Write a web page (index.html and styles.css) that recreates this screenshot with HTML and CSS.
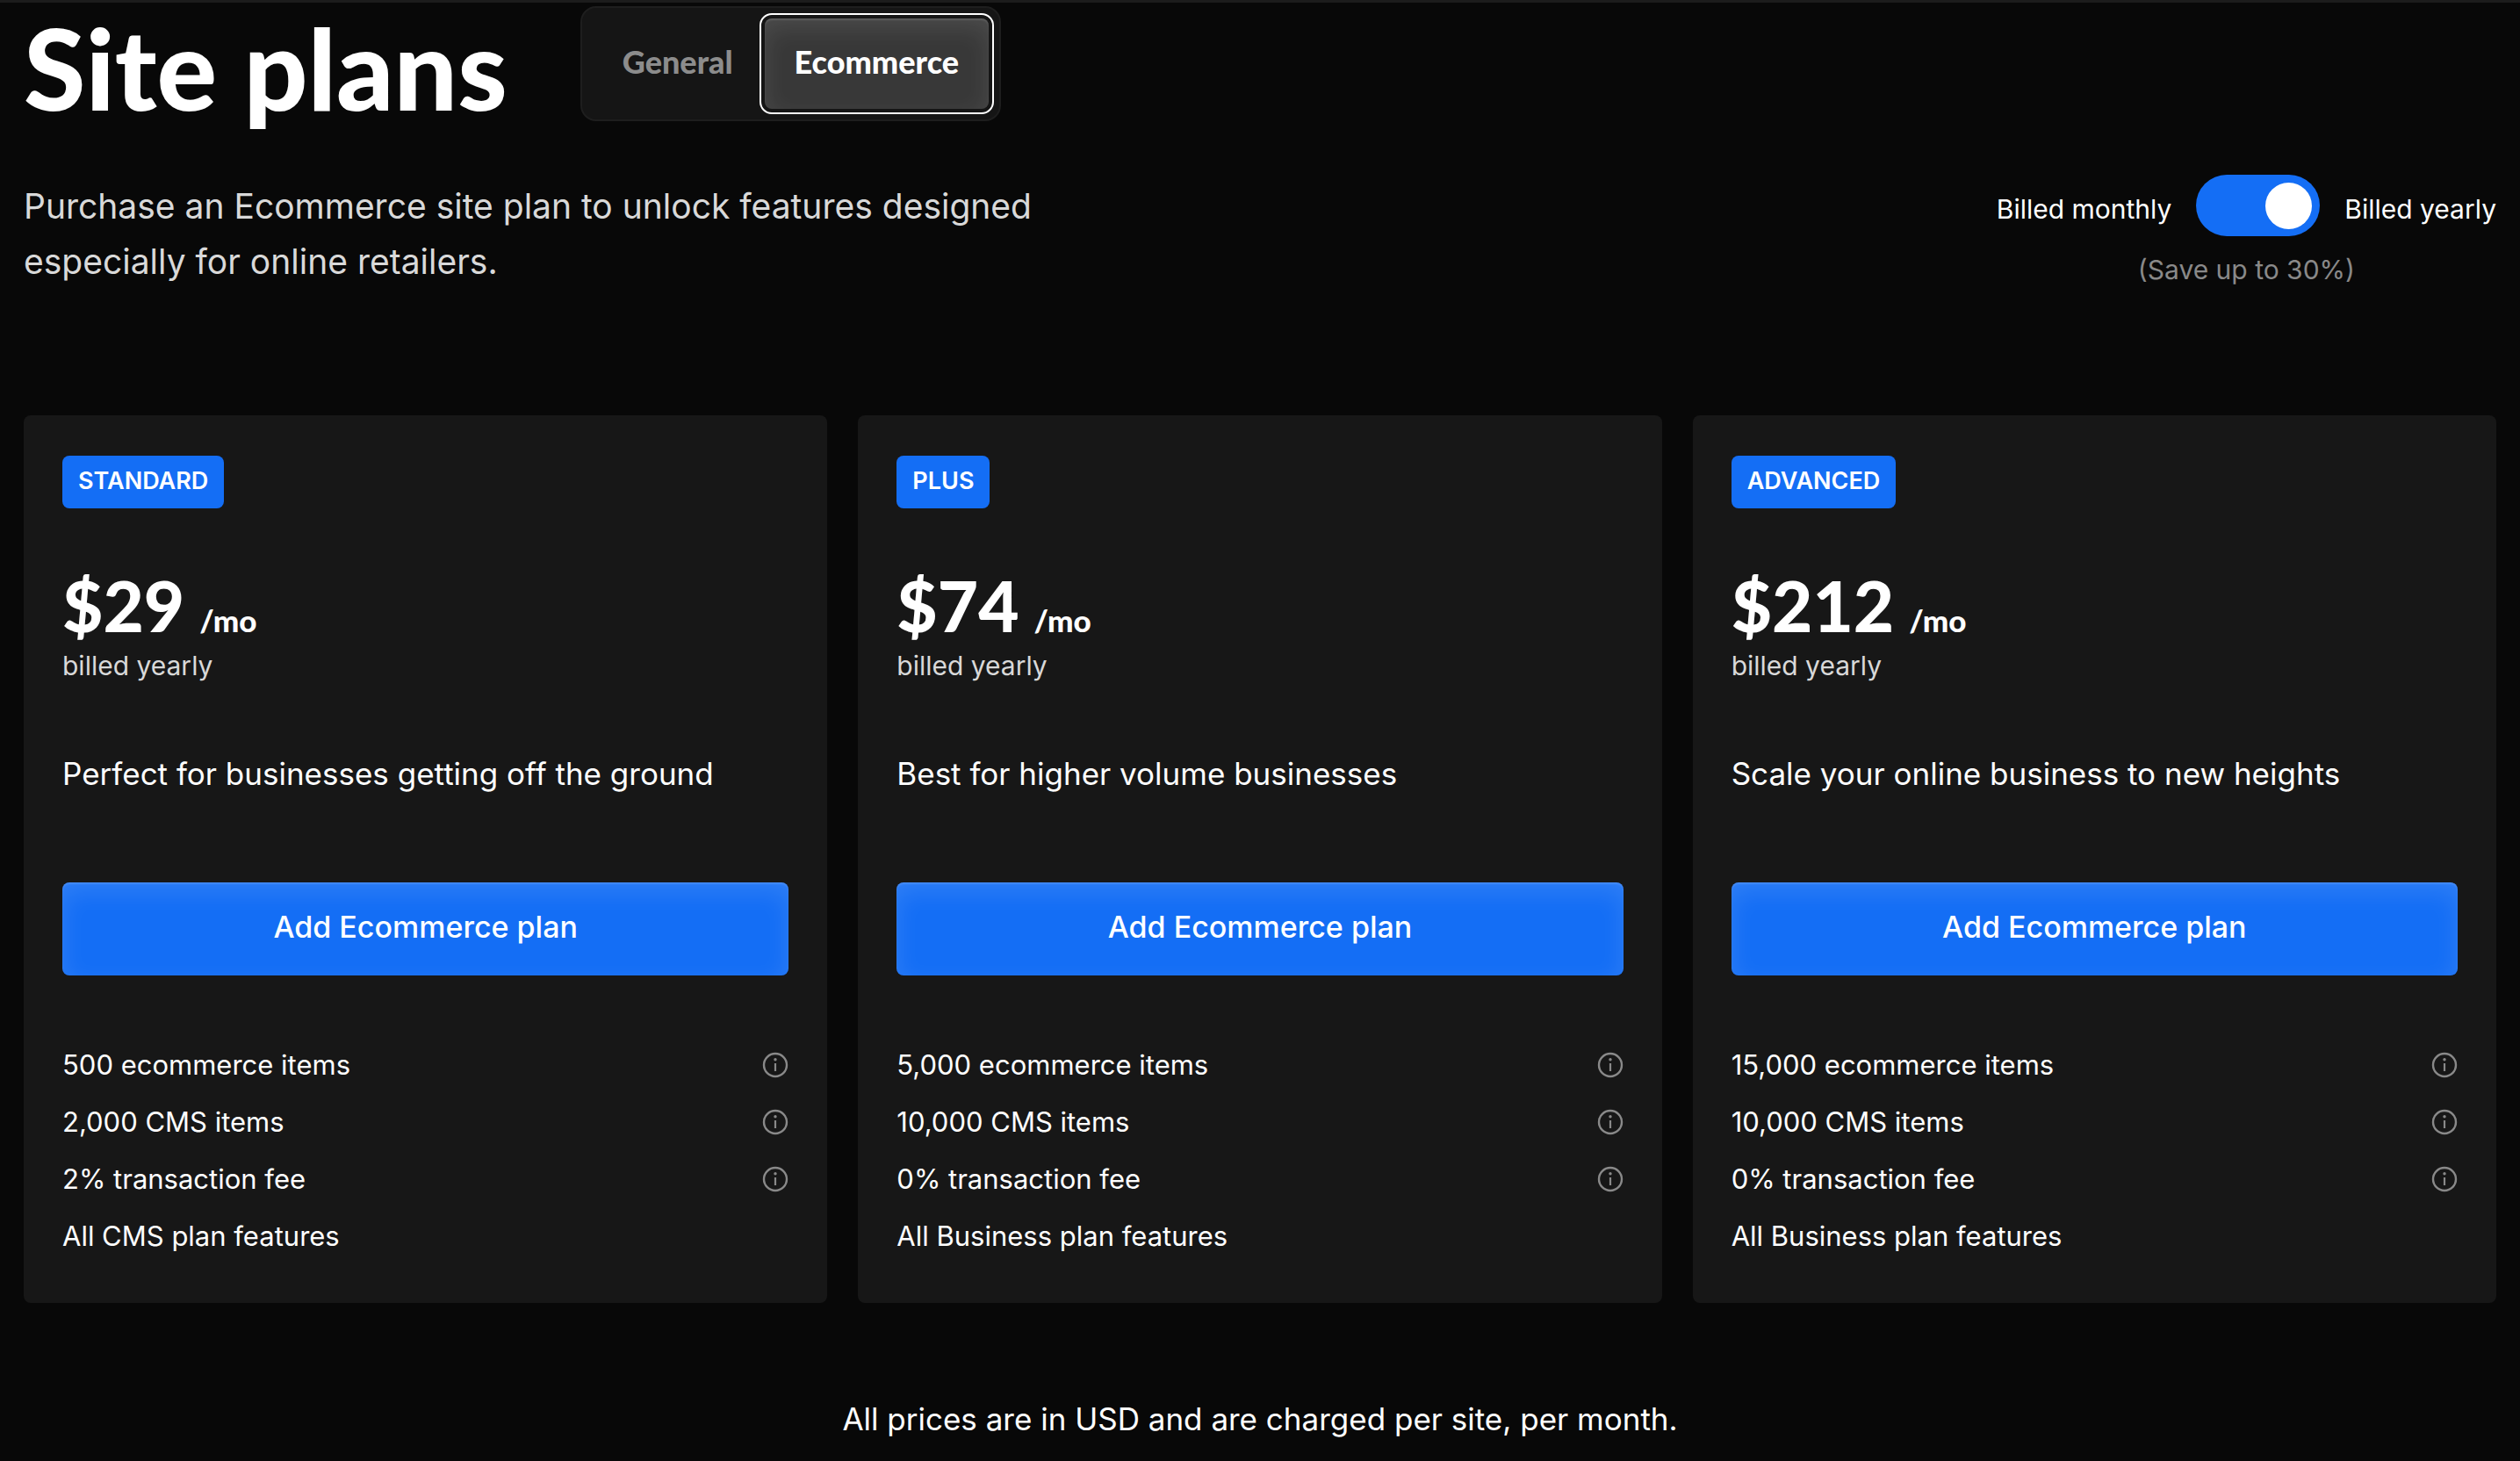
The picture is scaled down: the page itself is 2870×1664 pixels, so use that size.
FILE: index.html
```html
<!DOCTYPE html>
<html lang="en">
<head>
<meta charset="utf-8">
<meta name="viewport" content="width=device-width, initial-scale=1">
<title>Site plans</title>
<link rel="stylesheet" href="styles.css">
</head>
<body>
<svg class="sprite" aria-hidden="true">
  <symbol id="info" viewBox="0 0 30 30">
    <circle cx="15" cy="15" r="13" fill="none" stroke="currentColor" stroke-width="2.4"/>
    <circle cx="15" cy="8.8" r="1.7" fill="currentColor"/>
    <path d="M15 13v9" fill="none" stroke="currentColor" stroke-width="2.2"/>
  </symbol>
</svg>
<main class="page">
  <header class="header">
    <h1 class="title">Site plans</h1>
    <div class="tabs">
      <button class="tab" type="button">General</button>
      <button class="tab tab-active" type="button">Ecommerce</button>
    </div>
  </header>

  <div class="subheader">
    <p class="intro">Purchase an Ecommerce site plan to unlock features designed especially for online retailers.</p>
    <div class="billing">
      <div class="billing-row">
        <span class="billing-label">Billed monthly</span>
        <input class="switch" id="yearly" type="checkbox" role="switch" checked>
        <label class="billing-label" for="yearly">Billed yearly</label>
      </div>
      <p class="billing-note">(Save up to 30%)</p>
    </div>
  </div>

  <div class="plans">
    <section class="card">
      <h2 class="badge">STANDARD</h2>
      <p class="price">$29<span class="per">/mo</span></p>
      <p class="cycle">billed yearly</p>
      <p class="description">Perfect for businesses getting off the ground</p>
      <button class="cta" type="button">Add Ecommerce plan</button>
      <ul class="features">
        <li class="feature">500 ecommerce items<button class="info" type="button" aria-label="More information"><svg class="icon"><use href="#info"/></svg></button></li>
        <li class="feature">2,000 CMS items<button class="info" type="button" aria-label="More information"><svg class="icon"><use href="#info"/></svg></button></li>
        <li class="feature">2% transaction fee<button class="info" type="button" aria-label="More information"><svg class="icon"><use href="#info"/></svg></button></li>
        <li class="feature">All CMS plan features</li>
      </ul>
    </section>

    <section class="card">
      <h2 class="badge">PLUS</h2>
      <p class="price">$74<span class="per">/mo</span></p>
      <p class="cycle">billed yearly</p>
      <p class="description">Best for higher volume businesses</p>
      <button class="cta" type="button">Add Ecommerce plan</button>
      <ul class="features">
        <li class="feature">5,000 ecommerce items<button class="info" type="button" aria-label="More information"><svg class="icon"><use href="#info"/></svg></button></li>
        <li class="feature">10,000 CMS items<button class="info" type="button" aria-label="More information"><svg class="icon"><use href="#info"/></svg></button></li>
        <li class="feature">0% transaction fee<button class="info" type="button" aria-label="More information"><svg class="icon"><use href="#info"/></svg></button></li>
        <li class="feature">All Business plan features</li>
      </ul>
    </section>

    <section class="card">
      <h2 class="badge">ADVANCED</h2>
      <p class="price">$212<span class="per">/mo</span></p>
      <p class="cycle">billed yearly</p>
      <p class="description">Scale your online business to new heights</p>
      <button class="cta" type="button">Add Ecommerce plan</button>
      <ul class="features">
        <li class="feature">15,000 ecommerce items<button class="info" type="button" aria-label="More information"><svg class="icon"><use href="#info"/></svg></button></li>
        <li class="feature">10,000 CMS items<button class="info" type="button" aria-label="More information"><svg class="icon"><use href="#info"/></svg></button></li>
        <li class="feature">0% transaction fee<button class="info" type="button" aria-label="More information"><svg class="icon"><use href="#info"/></svg></button></li>
        <li class="feature">All Business plan features</li>
      </ul>
    </section>
  </div>

  <p class="footnote">All prices are in USD and are charged per site, per month.</p>
</main>
</body>
</html>
```
FILE: styles.css
```css
* {
  box-sizing: border-box;
  margin: 0;
  padding: 0;
}

body {
  background: #080808;
  border-top: 3px solid #1c1c1c;
  color: #fff;
  font-family: Inter, "Liberation Sans", sans-serif;
  font-size: 30px;
  line-height: 40px;
}

button {
  border: 0;
  color: inherit;
  font: inherit;
}

.sprite {
  display: none;
}

.page {
  padding: 4px 27px 22px;
}

/* Title and plan type tabs */

.header {
  display: flex;
  align-items: flex-start;
  gap: 83px;
}

.title {
  font-family: Lato, sans-serif;
  font-size: 128px;
  font-weight: 900;
  line-height: 140px;
}

.tabs {
  display: flex;
  gap: 2px;
  padding: 12px;
  background: #151515;
  border: 2px solid #1e1e1e;
  border-radius: 18px;
}

.tab {
  height: 103px;
  padding: 0 34px 5px;
  background: none;
  border-radius: 8px;
  color: #8c8c8c;
  font-family: Lato, sans-serif;
  font-size: 36px;
  font-weight: 900;
}

.tab-active {
  background: #383838;
  box-shadow: inset 0 2px 2px rgba(255, 255, 255, 0.12), inset 0 10px 28px rgba(255, 255, 255, 0.1);
  color: #fff;
  outline: 2px solid #fff;
  outline-offset: 4px;
}

/* Intro and billing switch */

.subheader {
  display: flex;
  justify-content: space-between;
  align-items: flex-start;
  margin: 52px 0 144px;
}

.intro {
  max-width: 1240px;
  padding-top: 4px;
  color: #d9d9d9;
  font-size: 39px;
  line-height: 63px;
}

.billing {
  text-align: center;
}

.billing-row {
  display: flex;
  align-items: center;
  gap: 28px;
}

.billing-label {
  padding-top: 8px;
}

.switch {
  display: flex;
  align-items: center;
  justify-content: flex-end;
  width: 141px;
  height: 70px;
  padding: 0 9px;
  appearance: none;
  background: #146ef5;
  border-radius: 35px;
}

.switch::before {
  content: "";
  width: 53px;
  height: 53px;
  background: #fff;
  border-radius: 50%;
}

.switch:not(:checked) {
  justify-content: flex-start;
  background: #5a5a5a;
}

.billing-note {
  margin-top: 18px;
  color: #898989;
}

/* Plan cards */

.plans {
  display: grid;
  grid-template-columns: repeat(3, 1fr);
  gap: 35px;
}

.card {
  display: flex;
  flex-direction: column;
  align-items: flex-start;
  padding: 46px 44px 44px;
  background: #171717;
  border-radius: 8px;
}

.badge {
  padding: 9px 18px 11px;
  background: #146ef5;
  border-radius: 8px;
  font-size: 27px;
  font-weight: 600;
}

.price {
  display: flex;
  align-items: baseline;
  gap: 17px;
  margin-top: 68px;
  font-family: Lato, sans-serif;
  font-size: 80px;
  font-weight: 900;
  line-height: 84px;
}

.per {
  font-size: 35px;
  line-height: 40px;
}

.cycle {
  margin-top: 7px;
  color: #d9d9d9;
}

.description {
  margin-top: 78px;
  font-size: 35px;
  line-height: 50px;
}

.cta {
  align-self: stretch;
  height: 106px;
  margin-top: 99px;
  padding-bottom: 4px;
  background: #146ef5;
  border-radius: 8px;
  box-shadow: inset 0 2px 2px rgba(255, 255, 255, 0.12), inset 0 10px 28px rgba(255, 255, 255, 0.12);
  font-size: 34px;
  font-weight: 500;
}

.features {
  align-self: stretch;
  margin-top: 69px;
  font-size: 31px;
  list-style: none;
}

.feature {
  display: flex;
  align-items: center;
  justify-content: space-between;
  line-height: 65px;
}

.info {
  background: none;
  color: #898989;
  line-height: 0;
}

.icon {
  width: 30px;
  height: 30px;
}

.footnote {
  margin-top: 107px;
  font-size: 35px;
  line-height: 50px;
  text-align: center;
}
```
